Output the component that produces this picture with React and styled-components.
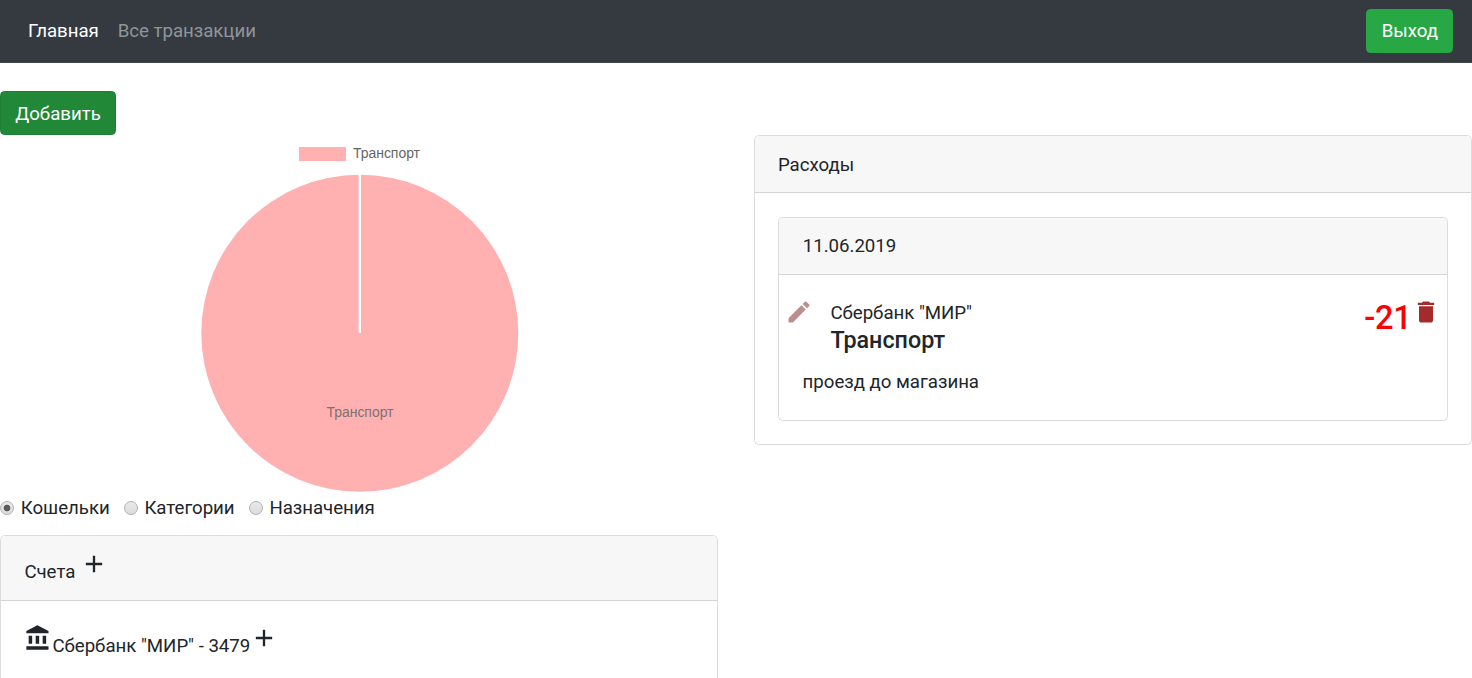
import React from "react";
import styled, { createGlobalStyle } from "styled-components";

const GlobalStyle = createGlobalStyle`
  *, *::before, *::after { box-sizing: border-box; }
  html, body { margin: 0; background: #fff; }
  body {
    height: 678px;
    overflow: hidden;
    font: 400 18.67px/28px Roboto, sans-serif;
    color: #212529;
  }
`;

const Page = styled.div`
  height: 678px;
  overflow: hidden;
`;

const Navbar = styled.nav`
  display: flex;
  align-items: center;
  height: 63px;
  padding: 0 18.6px 0 28px;
  background: #343a40;
  border-bottom: 1px solid #42474c;
`;

const NavLink = styled.a`
  margin-right: 19px;
  color: ${(p) => (p.$active ? "#fff" : "#929598")};
  letter-spacing: -0.03px;
  white-space: nowrap;
`;

const Button = styled.button`
  display: block;
  width: ${(p) => p.$width}px;
  height: 44px;
  padding: ${(p) => (p.$pressed ? 1 : 0)}px 0 0;
  border: 1px solid ${(p) => (p.$pressed ? "#1e7e34" : "#28a745")};
  border-radius: 4.5px;
  background: ${(p) => (p.$pressed ? "#218838" : "#28a745")};
  color: #fff;
  font: inherit;
`;

const NavEnd = styled.div`
  margin-left: auto;
`;

const Main = styled.main`
  padding-top: 28px;
`;

const Columns = styled.div`
  display: grid;
  grid-template-columns: 718px 718.4px;
  gap: 35.6px;
  align-items: start;
`;

const Chart = styled.svg`
  display: block;
  width: 718px;
  height: 359px;
  font-family: "Liberation Sans", Arial, sans-serif;
  font-size: 14px;
`;

const RadioGroup = styled.div`
  display: flex;
  height: 28px;
  margin-bottom: 13px;
`;

const RadioLabel = styled.label`
  display: flex;
  align-items: center;
  width: ${(p) => p.$width}px;
  white-space: nowrap;
  letter-spacing: -0.03px;
`;

const Radio = styled.input`
  appearance: none;
  flex: none;
  width: 14px;
  height: 14px;
  margin: 0 6.8px 0 0;
  border: 1px solid #b0b0b0;
  border-radius: 50%;
  background: linear-gradient(#e9e9e9, #dcdcdc);
  &:checked {
    background: radial-gradient(circle, #5a5a5a 0 3px, transparent 3.7px),
      linear-gradient(#e9e9e9, #dcdcdc);
  }
`;

const Card = styled.section`
  border: 1px solid #dcdcdc;
  border-radius: 4.5px;
  background: #fff;
  overflow: hidden;
`;

const CardHeader = styled.header`
  display: flex;
  height: ${(p) => p.$height || 57}px;
  padding: 14px 23.4px;
  border-bottom: 1px solid #d5d5d5;
  background: #f7f7f7;
`;

const CardBody = styled.div`
  padding: 24px 23px 23px 23.8px;
`;

const Label = styled.span`
  margin-top: ${(p) => p.$drop ?? 1}px;
  white-space: nowrap;
  letter-spacing: -0.03px;
`;

const Icon = styled.svg`
  display: block;
  flex: none;
  width: 28px;
  height: 28px;
  fill: ${(p) => p.$color || "#212529"};
`;

const PlusIcon = styled(Icon)`
  margin-left: ${(p) => p.$gap || 0}px;
`;

const Account = styled.div`
  display: flex;
  padding: 23px 23.4px 24px;
`;

const Transaction = styled.article`
  height: 145px;
  padding: 23px 6.6px 0 5.8px;
`;

const Summary = styled.div`
  display: flex;
  align-items: flex-start;
`;

const Names = styled.div`
  flex: 1;
  padding: 0 0 0 17.2px;
`;

const Wallet = styled.div`
  height: 28px;
  padding-top: 0.5px;
  letter-spacing: -0.03px;
`;

const Category = styled.h5`
  margin: 0;
  font-size: 23.33px;
  font-weight: 500;
  line-height: 28px;
`;

const Amount = styled.div`
  margin: 1px 1px 0 0;
  color: #f00;
  font-size: 32.6px;
  font-weight: 500;
  line-height: 38px;
  letter-spacing: -0.3px;
`;

const Note = styled.p`
  margin: 14px 0 0 17.4px;
  letter-spacing: -0.02px;
`;

const paths = {
  add: "M19 13h-6v6h-2v-6H5v-2h6V5h2v6h6v2z",
  bank: "M4 10v7h3v-7H4zm6 0v7h3v-7h-3zM2 22h19v-3H2v3zm14-12v7h3v-7h-3zm-4.5-9L2 6v2h19V6l-9.5-5z",
  edit: "M3 17.25V21h3.75L17.81 9.94l-3.75-3.75L3 17.25zM20.71 7.04a.996.996 0 0 0 0-1.41l-2.34-2.34a.996.996 0 0 0-1.41 0l-1.83 1.83 3.75 3.75 1.83-1.83z",
  trash: "M6 19c0 1.1.9 2 2 2h8c1.1 0 2-.9 2-2V7H6v12zM19 4h-3.5l-1-1h-5l-1 1H5v2h14V4z",
};

const Plus = ({ gap }) => (
  <PlusIcon $gap={gap} viewBox="0 0 24 24"><path d={paths.add} /></PlusIcon>
);

export default function App() {
  return (
    <Page>
      <GlobalStyle />
      <Navbar>
        <NavLink $active>Главная</NavLink>
        <NavLink>Все транзакции</NavLink>
        <NavEnd><Button $width={87}>Выход</Button></NavEnd>
      </Navbar>
      <Main>
        <Button $width={116} $pressed>Добавить</Button>
        <Columns>
          <div>
            <Chart viewBox="0 0 718 359">
              <rect x="299" y="12" width="47" height="14" fill="#ffb1b1" />
              <text x="353" y="23" fill="#666" textLength="67">Транспорт</text>
              <circle cx="359.8" cy="198.2" r="158.5" fill="#ffb1b1" />
              <path d="M359.8 39v159" stroke="#fff" strokeWidth="2.4" />
              <text x="326.5" y="282" fill="#666" fillOpacity=".87" textLength="67">Транспорт</text>
            </Chart>
            <RadioGroup>
              <RadioLabel $width={123.6}><Radio type="radio" name="view" defaultChecked />Кошельки</RadioLabel>
              <RadioLabel $width={125}><Radio type="radio" name="view" />Категории</RadioLabel>
              <RadioLabel $width={130}><Radio type="radio" name="view" />Назначения</RadioLabel>
            </RadioGroup>
            <Card>
              <CardHeader $height={65}>
                <Label $drop={8}>Счета</Label>
                <Plus gap={5} />
              </CardHeader>
              <Account>
                <Icon viewBox="0 0 24 24"><path d={paths.bank} /></Icon>
                <Label $drop={8}>Сбербанк "МИР" - 3479</Label>
                <Plus />
              </Account>
            </Card>
          </div>
          <Card>
            <CardHeader><Label>Расходы</Label></CardHeader>
            <CardBody>
              <Card>
                <CardHeader><Label $drop={0}>11.06.2019</Label></CardHeader>
                <Transaction>
                  <Summary>
                    <Icon $color="rosybrown" viewBox="0 0 24 24"><path d={paths.edit} /></Icon>
                    <Names>
                      <Wallet>Сбербанк "МИР"</Wallet>
                      <Category>Транспорт</Category>
                    </Names>
                    <Amount>-21</Amount>
                    <Icon $color="brown" viewBox="0 0 24 24"><path d={paths.trash} /></Icon>
                  </Summary>
                  <Note>проезд до магазина</Note>
                </Transaction>
              </Card>
            </CardBody>
          </Card>
        </Columns>
      </Main>
    </Page>
  );
}
